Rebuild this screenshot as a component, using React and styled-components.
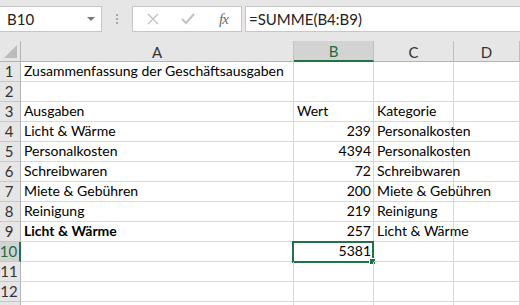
import React from 'react';
import styled, {createGlobalStyle} from 'styled-components';

const GlobalStyle = createGlobalStyle`
  body {
    margin: 0;
    background: #ffffff;
    font-family: Lato, "Liberation Sans", sans-serif;
    overflow: hidden;
  }
`;

const columns = ['A', 'B', 'C', 'D'];

const rows = [
  ['Zusammenfassung der Geschäftsausgaben', '', '', ''],
  ['', '', '', ''],
  ['Ausgaben', 'Wert', 'Kategorie', ''],
  ['Licht & Wärme', 239, 'Personalkosten', ''],
  ['Personalkosten', 4394, 'Personalkosten', ''],
  ['Schreibwaren', 72, 'Schreibwaren', ''],
  ['Miete & Gebühren', 200, 'Miete & Gebühren', ''],
  ['Reinigung', 219, 'Reinigung', ''],
  [{text: 'Licht & Wärme', bold: true}, 257, 'Licht & Wärme', ''],
  ['', 5381, '', ''],
  ['', '', '', ''],
  ['', '', '', ''],
];

const SELECTED = {row: 10, col: 1};

export default function App() {
  return (
    <Page>
      <GlobalStyle />
      <Toolbar>
        <NameBox>
          <span>B10</span>
          <svg width="8" height="5" viewBox="0 0 8 5">
            <path d="M0 0h8L4 4z" fill="#7a7a7a" />
          </svg>
        </NameBox>
        <Grip>
          <i /><i /><i />
        </Grip>
        <FxButtons>
          <svg width="12" height="12" viewBox="0 0 12 12">
            <path d="M1 1l10 10M11 1L1 11" stroke="#c2c2c2" strokeWidth="1.4" />
          </svg>
          <svg width="14" height="12" viewBox="0 0 14 12">
            <path d="M1 6l4 4 8-9" stroke="#c2c2c2" strokeWidth="2" fill="none" />
          </svg>
          <Fx>fx</Fx>
        </FxButtons>
        <FormulaInput>=SUMME(B4:B9)</FormulaInput>
      </Toolbar>

      <Sheet>
        <Corner>
          <svg width="13" height="13" viewBox="0 0 13 13">
            <path d="M13 0v13H0z" fill="#bcbcbc" />
          </svg>
        </Corner>
        {columns.map((c, i) => (
          <ColHead key={c} $active={i === SELECTED.col}>{c}</ColHead>
        ))}
        {rows.map((r, ri) => (
          <React.Fragment key={ri}>
            <RowHead $active={ri + 1 === SELECTED.row}>{ri + 1}</RowHead>
            {r.map((v, ci) => {
              const bold = typeof v === 'object' && v !== null;
              const text = bold ? v.text : v;
              const selected = ri + 1 === SELECTED.row && ci === SELECTED.col;
              return (
                <Cell key={ci} $num={typeof v === 'number'} $bold={bold}>
                  {text}
                  {selected && <Selection><Handle /></Selection>}
                </Cell>
              );
            })}
          </React.Fragment>
        ))}
        <RowHead />
        {columns.map(c => <Cell key={c} />)}
      </Sheet>
    </Page>
  );
}

const Page = styled.div`
  width: 520px;
  height: 305px;
  overflow: hidden;
`;

const Toolbar = styled.div`
  display: flex;
  align-items: flex-start;
  height: 41px;
  padding-top: 6px;
  box-sizing: border-box;
  background: #e6e6e6;
`;

const NameBox = styled.div`
  display: flex;
  align-items: center;
  justify-content: space-between;
  box-sizing: border-box;
  width: 102px;
  height: 26px;
  padding: 0 6px 0 7px;
  background: #fff;
  border: 1px solid #c6c6c6;
  border-left: none;
  font-size: 15px;
  color: #222;
`;

const Grip = styled.div`
  display: flex;
  flex-direction: column;
  gap: 2px;
  width: 30px;
  height: 26px;
  align-items: center;
  justify-content: center;

  i {
    display: block;
    width: 2px;
    height: 2px;
    background: #a8a8a8;
  }
`;

const FxButtons = styled.div`
  display: flex;
  align-items: center;
  box-sizing: border-box;
  width: 110px;
  height: 26px;
  padding: 0 10px 0 14px;
  gap: 23px;
  background: #fff;
  border: 1px solid #c6c6c6;

  svg:nth-child(2) {
    margin-left: -1px;
  }
`;

const Fx = styled.span`
  font-family: "Liberation Serif", serif;
  font-style: italic;
  font-size: 15px;
  color: #6a6a6a;
  letter-spacing: -1px;
  margin-left: 1px;
`;

const FormulaInput = styled.div`
  flex: 1;
  display: flex;
  align-items: center;
  box-sizing: border-box;
  height: 26px;
  margin-left: 3px;
  padding-left: 3px;
  background: #fff;
  border: 1px solid #c6c6c6;
  border-right: none;
  font-size: 15px;
  color: #222;
`;

const Sheet = styled.div`
  display: grid;
  grid-template-columns: 21px 273px 80px 80px 1fr;
  grid-template-rows: 21px;
  grid-auto-rows: 20px;
  font-size: 15px;
`;

const Corner = styled.div`
  display: flex;
  align-items: flex-end;
  justify-content: flex-end;
  padding: 0 3px 3px 0;
  background: #e6e6e6;
  border-right: 1px solid #b4b4b4;
  border-bottom: 1px solid #b4b4b4;
`;

const ColHead = styled.div`
  display: flex;
  align-items: center;
  justify-content: center;
  background: ${p => (p.$active ? '#d3d3d3' : '#e6e6e6')};
  color: ${p => (p.$active ? '#1e6b40' : '#333')};
  border-right: 1px solid #c0c0c0;
  border-bottom: ${p => (p.$active ? '2px solid #217346' : '1px solid #b4b4b4')};
  box-sizing: border-box;
  padding-top: 1px;
`;

const RowHead = styled.div`
  display: flex;
  align-items: flex-end;
  justify-content: center;
  padding: 0 2px 1px 0;
  background: ${p => (p.$active ? '#d3d3d3' : '#e6e6e6')};
  color: ${p => (p.$active ? '#1e6b40' : '#333')};
  border-right: ${p => (p.$active ? '2px solid #217346' : '1px solid #b4b4b4')};
  border-bottom: 1px solid #c8c8c8;
  box-sizing: border-box;
`;

const Cell = styled.div`
  position: relative;
  display: flex;
  align-items: flex-end;
  justify-content: ${p => (p.$num ? 'flex-end' : 'flex-start')};
  padding: 0 2px 1px 3px;
  border-right: 1px solid #d9d9d9;
  border-bottom: 1px solid #d9d9d9;
  white-space: nowrap;
  overflow: visible;
  font-size: 14px;
  font-weight: ${p => (p.$bold ? 700 : 400)};
  color: #000;
  line-height: 18px;
  min-width: 0;
`;

const Selection = styled.div`
  position: absolute;
  left: -2px;
  top: -1px;
  right: -1px;
  bottom: -2px;
  border: 2px solid #217346;
  pointer-events: none;
`;

const Handle = styled.div`
  position: absolute;
  right: -4px;
  bottom: -4px;
  width: 5px;
  height: 5px;
  background: #217346;
  border: 1px solid #fff;
`;
